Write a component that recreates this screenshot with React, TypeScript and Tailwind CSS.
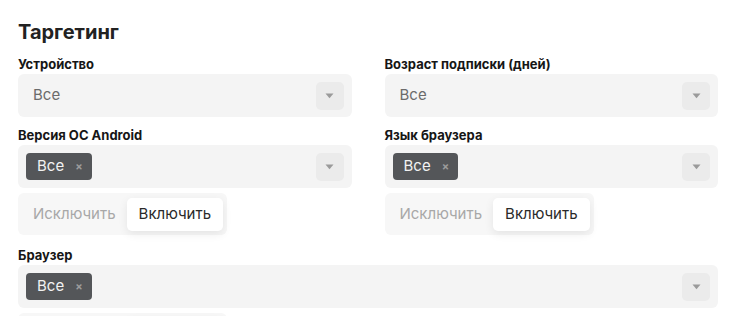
import { useState } from "react";

type Mode = "exclude" | "include";

function Arrow() {
  return (
    <div className="ml-auto flex h-[28px] w-[28px] shrink-0 items-center justify-center rounded-[5px] bg-[#ebebeb]">
      <svg width="9" height="6" viewBox="0 0 9 6">
        <path d="M0.5 0.5h8L4.5 5.2z" fill="#9a9a9a" />
      </svg>
    </div>
  );
}

function Label({ children }: { children: React.ReactNode }) {
  return (
    <div className="h-[16px] text-[13px] font-bold leading-[16px] text-[#161616]">
      {children}
    </div>
  );
}

function Select({ value }: { value: string }) {
  return (
    <div className="mt-[2px] flex h-[43px] items-center rounded-[6px] bg-[#f4f4f4] pl-[15px] pr-[8px]">
      <span className="text-[15px] text-[#6b6b6b]">{value}</span>
      <Arrow />
    </div>
  );
}

function MultiSelect({ tags }: { tags: string[] }) {
  return (
    <div className="mt-[2px] flex h-[43px] items-center gap-1 rounded-[6px] bg-[#f4f4f4] pl-[8px] pr-[8px]">
      {tags.map((t) => (
        <span
          key={t}
          className="flex h-[27px] items-center gap-[11px] rounded-[4px] bg-[#545659] pl-[11px] pr-[9px] text-[15px] text-[#f2f2f2]"
        >
          {t}
          <span className="text-[11px] font-bold text-[#9c9c9c]">×</span>
        </span>
      ))}
      <Arrow />
    </div>
  );
}

function Toggle() {
  const [mode, setMode] = useState<Mode>("include");
  const btn = (m: Mode, text: string) => (
    <button
      onClick={() => setMode(m)}
      className={
        mode === m
          ? "h-[33px] rounded-[5px] bg-white px-[12px] text-[15px] text-[#2a2a2a] shadow-[0_3px_10px_rgba(0,0,0,0.08)]"
          : "h-[33px] rounded-[5px] px-[11px] text-[15px] text-[#a8a8a8]"
      }
    >
      {text}
    </button>
  );
  return (
    <div className="mt-[5px] flex h-[42px] w-fit items-center rounded-[6px] bg-[#f7f7f7] p-[4px]">
      {btn("exclude", "Исключить")}
      {btn("include", "Включить")}
    </div>
  );
}

export default function App() {
  return (
    <div className="min-h-screen bg-white pl-[18px] pr-[12px] pt-[18px] font-['Inter',sans-serif]">
      <h2 className="h-[28px] text-[20px] font-bold leading-[28px] text-[#222]">Таргетинг</h2>

      <div className="mt-[10px] grid grid-cols-2 gap-x-[33px]">
        <div>
          <Label>Устройство</Label>
          <Select value="Все" />
        </div>
        <div>
          <Label>Возраст подписки (дней)</Label>
          <Select value="Все" />
        </div>

        <div className="mt-[10px]">
          <Label>Версия ОС Android</Label>
          <MultiSelect tags={["Все"]} />
          <Toggle />
        </div>
        <div className="mt-[10px]">
          <Label>Язык браузера</Label>
          <MultiSelect tags={["Все"]} />
          <Toggle />
        </div>

        <div className="col-span-2 mt-[12px]">
          <Label>Браузер</Label>
          <MultiSelect tags={["Все"]} />
          <Toggle />
        </div>
      </div>
    </div>
  );
}
